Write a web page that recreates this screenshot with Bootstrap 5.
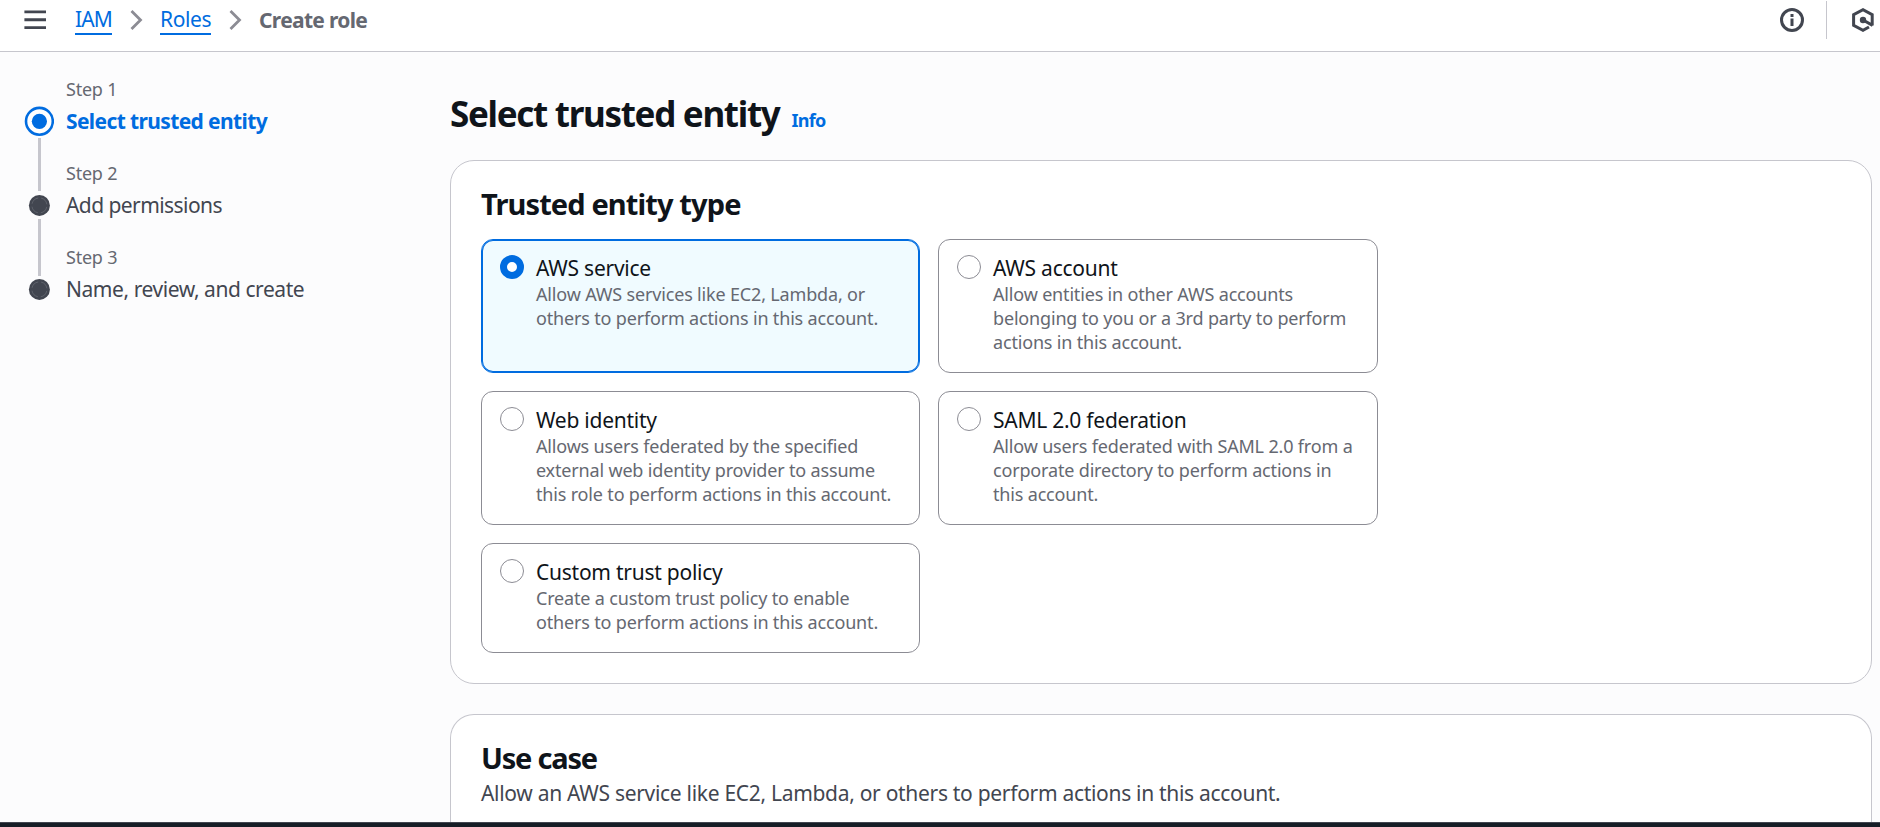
<!DOCTYPE html>
<html lang="en">
<head>
<meta charset="utf-8">
<meta name="viewport" content="width=device-width, initial-scale=1">
<title>Create role</title>
<link href="https://cdn.jsdelivr.net/npm/bootstrap@5.3.0/dist/css/bootstrap.min.css" rel="stylesheet">
<style>
  body { font: 400 21px/30px "Noto Sans", sans-serif; color: #0f141a; background: #fcfcfd; height: 100vh; overflow: hidden; }
  .topbar { height: 52px; padding: 0 5px 11px 24px; background: #fff; border-bottom: 1px solid #c6c6cd; }
  .crumbs { margin-left: 29px; color: #656871; }
  .crumbs a { color: #006ce0; text-decoration: none; height: 30px; border-bottom: 2px solid #006ce0; line-height: 29px; }
  .crumbs a.c-iam { letter-spacing: -.87px; }
  .crumbs a.c-roles { letter-spacing: -.4px; }
  .crumbs .c-now { letter-spacing: -.69px; line-height: 29px; }
  .crumbs svg { margin: 0 17px 0 18px; }
  .rule-v { width: 1px; height: 38px; background: #c6c6cd; margin: 0 24px 0 22px; }
  .steps { width: 450px; padding: 25px 0 0 24px; }
  .stepitem { height: 84px; gap: 12px; }
  .rail { width: 30px; padding-top: 29px; }
  .stepno { font-size: 18px; line-height: 24px; color: #656871; letter-spacing: -.22px; margin-bottom: 5px; }
  .steptitle { color: #424650; }
  .bar { width: 3px; background: #c6c6cd; flex: none; margin-top: 2px; }
  .rail svg { flex: none; }
  .content { width: 1422px; padding-top: 38px; }
  h1 { font-size: 35px; line-height: 45px; font-weight: 700; letter-spacing: -1.3px; margin: 0; }
  .info { font-size: 18px; font-weight: 700; color: #006ce0; letter-spacing: -.7px; text-decoration: none; margin-left: 12px; }
  .pagehead { height: 45px; padding-top: 1px; margin-bottom: 25px; }
  .panel { background: #fff; border: 1px solid #c6c6cd; border-radius: 24px; padding: 25px 30px 30px; }
  .panel.cut { border-bottom: 0; border-radius: 24px 24px 0 0; height: 113px; padding-bottom: 0; }
  h2 { font-size: 29px; line-height: 36px; font-weight: 700; margin: 0; letter-spacing: -.88px; }
  .tiles { display: grid; grid-template-columns: 439px 440px; gap: 18px; margin-top: 17px; }
  .tile { border: 1px solid #8c8c94; border-radius: 12px; padding: 13px 17px 18px 18px; gap: 12px; letter-spacing: -.25px; }
  .tile.on { border-color: #006ce0; box-shadow: inset 0 0 0 1px #006ce0; background: #f0fbff; }
  .tile .desc { font-size: 18px; line-height: 24px; margin-top: -1px; color: #656871; letter-spacing: -.17px; }
  .dot { width: 24px; height: 24px; flex: none; margin-top: 2px; border-radius: 50%; border: 1.5px solid #8c8c94; background: #fff; }
  .tile.on .dot { border: 7px solid #006ce0; }
  .footbar { height: 5px; background: #161d26; border-top: 1px solid #424650; }
</style>
</head>
<body>
<header class="topbar d-flex align-items-center">
  <svg width="22" height="20" viewBox="0 0 22 20" stroke="#424650" stroke-width="2.9"><path d="M.4 1.9H22M.4 9.7H22M.4 17.6H22"/></svg>
  <nav class="crumbs d-flex align-items-center">
    <a href="#" class="c-iam">IAM</a>
    <svg width="13" height="20" viewBox="0 0 13 20" fill="none" stroke="#8c8c94" stroke-width="2.8"><path d="M1.5 1l9 9-9 9"/></svg>
    <a href="#" class="c-roles">Roles</a>
    <svg width="13" height="20" viewBox="0 0 13 20" fill="none" stroke="#8c8c94" stroke-width="2.8"><path d="M1.5 1l9 9-9 9"/></svg>
    <span class="c-now fw-bold">Create role</span>
  </nav>
  <div class="ms-auto d-flex align-items-center">
    <svg width="24" height="24" viewBox="0 0 24 24"><circle cx="12" cy="12" r="10.5" fill="none" stroke="#424650" stroke-width="3"/><path d="M12 6v3M12 10.5v7.5" stroke="#424650" stroke-width="3"/></svg>
    <span class="rule-v"></span>
    <svg width="24" height="24" viewBox="0 0 24 24" fill="none" stroke="#424650" stroke-width="3"><path d="M21.2 17.4V6.7L12 1.7 2.6 6.7v10.6L12 22.3l6-3.3"/><path d="M12 12l9.6 5.4"/><circle cx="12" cy="12" r="3.2" fill="#424650" stroke="none"/></svg>
  </div>
</header>
<div class="d-flex">
  <aside class="steps flex-shrink-0">
    <div class="stepitem d-flex">
      <div class="rail d-flex flex-column align-items-center">
        <svg width="30" height="30" viewBox="0 0 30 30"><circle cx="15.4" cy="15.3" r="13.4" fill="#fff" stroke="#006ce0" stroke-width="2.6"/><circle cx="15.4" cy="15.3" r="7.6" fill="#006ce0"/></svg>
        <span class="bar" style="height:53px"></span>
      </div>
      <div><div class="stepno">Step 1</div><div class="steptitle fw-bold" style="letter-spacing:-.62px;color:#006ce0">Select trusted entity</div></div>
    </div>
    <div class="stepitem d-flex">
      <div class="rail d-flex flex-column align-items-center">
        <svg width="30" height="30" viewBox="0 0 30 30"><circle cx="15.4" cy="15.4" r="10.5" fill="#424650"/><circle cx="15.4" cy="15.4" r="7.5" fill="none" stroke="#656871" stroke-width=".8" stroke-dasharray="8.8 3" stroke-dashoffset="-1.5"/></svg>
        <span class="bar" style="height:57px;margin-top:-1px"></span>
      </div>
      <div><div class="stepno">Step 2</div><div class="steptitle" style="letter-spacing:-.57px">Add permissions</div></div>
    </div>
    <div class="stepitem d-flex">
      <div class="rail d-flex flex-column align-items-center">
        <svg width="30" height="30" viewBox="0 0 30 30"><circle cx="15.4" cy="15.4" r="10.5" fill="#424650"/><circle cx="15.4" cy="15.4" r="7.5" fill="none" stroke="#656871" stroke-width=".8" stroke-dasharray="8.8 3" stroke-dashoffset="-1.5"/></svg>
      </div>
      <div><div class="stepno">Step 3</div><div class="steptitle" style="letter-spacing:-.44px">Name, review, and create</div></div>
    </div>
  </aside>
  <main class="content flex-shrink-0">
    <div class="pagehead d-flex align-items-baseline"><h1>Select trusted entity</h1><a href="#" class="info">Info</a></div>
    <section class="panel">
      <h2>Trusted entity type</h2>
      <div class="tiles">
        <div class="tile on d-flex"><span class="dot"></span><div>AWS service<div class="desc">Allow AWS services like EC2, Lambda, or<br>others to perform actions in this account.</div></div></div>
        <div class="tile d-flex"><span class="dot"></span><div>AWS account<div class="desc">Allow entities in other AWS accounts<br>belonging to you or a 3rd party to perform<br>actions in this account.</div></div></div>
        <div class="tile d-flex"><span class="dot"></span><div>Web identity<div class="desc">Allows users federated by the specified<br>external web identity provider to assume<br>this role to perform actions in this account.</div></div></div>
        <div class="tile d-flex"><span class="dot"></span><div>SAML 2.0 federation<div class="desc">Allow users federated with SAML 2.0 from a<br>corporate directory to perform actions in<br>this account.</div></div></div>
        <div class="tile d-flex"><span class="dot"></span><div>Custom trust policy<div class="desc">Create a custom trust policy to enable<br>others to perform actions in this account.</div></div></div>
      </div>
    </section>
    <section class="panel cut" style="margin-top:30px">
      <h2 style="letter-spacing:-1.2px">Use case</h2>
      <div style="margin-top:2px;color:#424650;letter-spacing:-.3px">Allow an AWS service like EC2, Lambda, or others to perform actions in this account.</div>
    </section>
  </main>
</div>
<footer class="footbar fixed-bottom"></footer>
<script src="https://cdn.jsdelivr.net/npm/bootstrap@5.3.0/dist/js/bootstrap.bundle.min.js"></script>
</body>
</html>
